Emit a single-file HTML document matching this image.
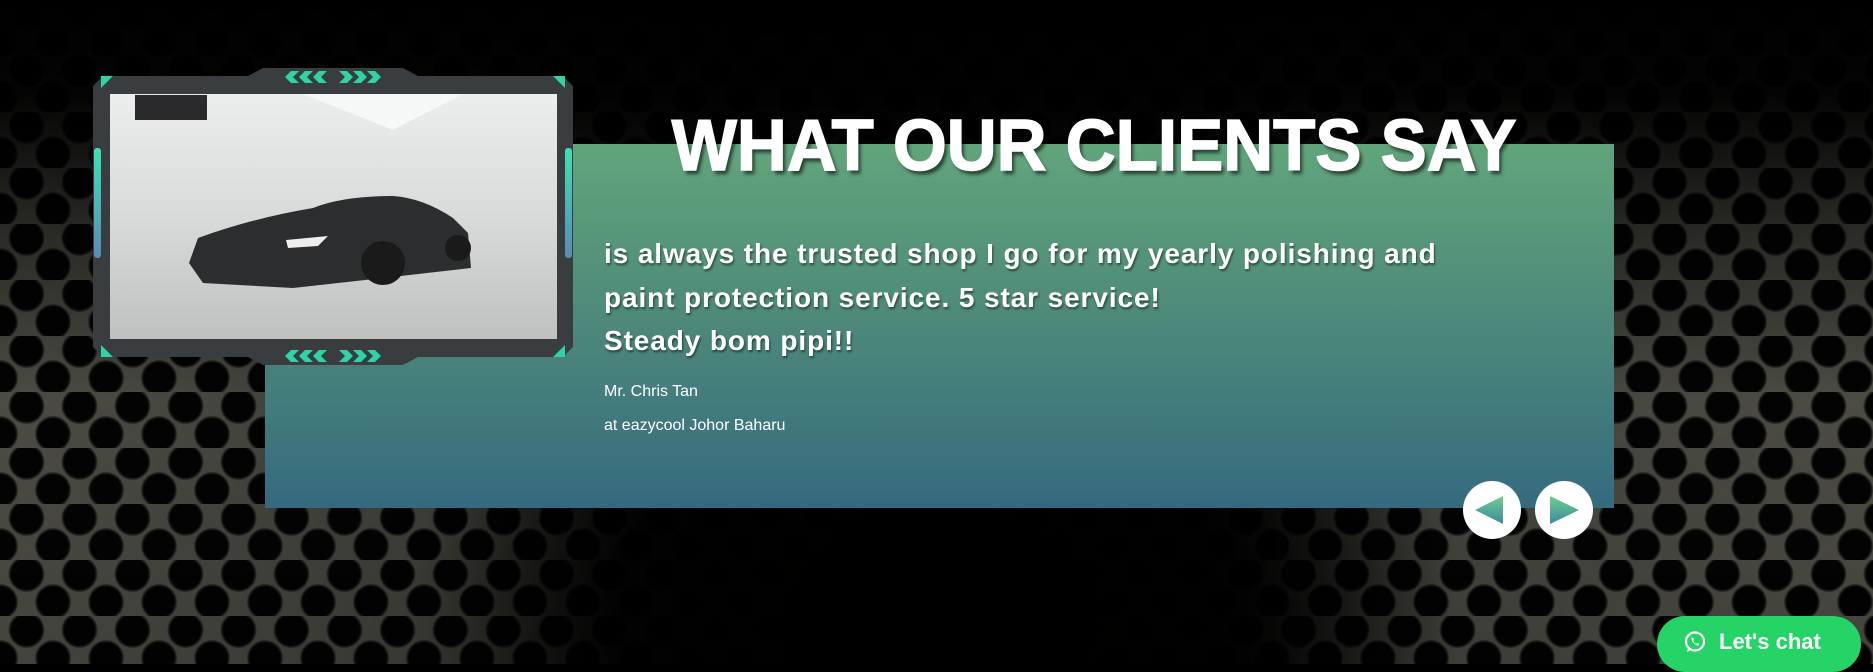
<!DOCTYPE html>
<html><head><meta charset="utf-8">
<style>
html,body{margin:0;padding:0;width:1873px;height:664px;overflow:hidden;background:#000;font-family:"Liberation Sans",sans-serif}
.bg{position:absolute;inset:0;
background-color:#55554d;
background-image:radial-gradient(circle at 26.5px 14px,#030303 15px,#1a1a18 16.5px,rgba(0,0,0,0) 18.5px),
radial-gradient(circle at 0px 42px,#030303 15px,#1a1a18 16.5px,rgba(0,0,0,0) 18.5px),
radial-gradient(circle at 53px 42px,#030303 15px,#1a1a18 16.5px,rgba(0,0,0,0) 18.5px);
background-size:53px 56px;}
.shade{position:absolute;inset:0;
background:radial-gradient(ellipse 520px 420px at 930px 620px,rgba(0,0,0,1) 0%,rgba(0,0,0,.95) 60%,rgba(0,0,0,0) 100%),
linear-gradient(180deg,rgba(0,0,0,1) 0%,rgba(0,0,0,.95) 14%,rgba(0,0,0,.5) 35%,rgba(0,0,0,.1) 60%,rgba(0,0,0,.2) 100%),
linear-gradient(90deg,rgba(0,0,0,0) 0%,rgba(0,0,0,0.2) 25%,rgba(0,0,0,0.7) 40%,rgba(0,0,0,0.75) 62%,rgba(0,0,0,0.1) 78%,rgba(0,0,0,0) 100%);}
.panel{position:absolute;left:265px;top:144px;width:1349px;height:364px;background:linear-gradient(180deg,#61a57b 0%,#4f8b7a 45%,#356a7e 100%)}
.title{position:absolute;left:0;top:105px;width:2188px;text-align:center;color:#fff;font-weight:bold;font-size:72px;letter-spacing:0px;text-shadow:3px 4px 4px rgba(0,0,0,.6);white-space:nowrap;transform:scaleX(.96);transform-origin:1094px 0;-webkit-text-stroke:1.5px #fff}
.body{position:absolute;left:604px;top:232px;color:#fff;font-weight:bold;font-size:28px;line-height:43.5px;text-shadow:1px 2px 2px rgba(0,0,0,.5);letter-spacing:.9px}
.name{position:absolute;left:604px;color:#fff;font-size:16px}
.btn{position:absolute;top:481px;width:58px;height:58px;border-radius:50%;background:#fff}
.chat{position:absolute;left:1657px;top:616px;width:204px;height:56px;border-radius:28px;background:#25d366;color:#fff;font-weight:bold;font-size:22px}
.frame{position:absolute;left:93px;top:68px;width:480px;height:297px}
</style></head><body>
<div class="bg"></div><div class="shade"></div>
<div class="panel"></div>
<div class="frame">
<svg width="480" height="297" viewBox="0 0 480 297">
<path d="M10 8 H155 L170 0 H310 L325 8 H470 L480 18 V279 L470 289 H325 L310 297 H170 L155 289 H10 L0 279 V18 Z" fill="#3a3d3f"/>
<defs><linearGradient id="w" x1="0" y1="0" x2="0" y2="1"><stop offset="0" stop-color="#eceded"/><stop offset=".5" stop-color="#d9dada"/><stop offset="1" stop-color="#bfc0c0"/></linearGradient>
<linearGradient id="s" x1="0" y1="0" x2="0" y2="1"><stop offset="0" stop-color="#3fe0b0"/><stop offset="1" stop-color="#5a8ab8"/></linearGradient></defs>
<rect x="17" y="26" width="447" height="245" fill="url(#w)"/>
<path d="M210 26 L370 26 L300 62 Z" fill="#f6f7f7"/>
<rect x="42" y="27" width="72" height="25" fill="#2a2a2c"/>
<path d="M105 170 Q160 150 220 140 Q250 128 300 128 Q330 130 360 150 L375 165 L378 200 L290 210 L200 220 L110 215 L96 195 Z" fill="#2c2d2e"/>
<circle cx="290" cy="195" r="22" fill="#1a1a1a"/><circle cx="365" cy="180" r="13" fill="#1a1a1a"/>
<path d="M193 172 L235 168 L225 178 L195 180 Z" fill="#eee"/>
<path d="M8 8 L20 8 L8 20 Z" fill="#2fd3a5"/><path d="M472 8 L460 8 L472 20 Z" fill="#2fd3a5"/>
<path d="M8 289 L20 289 L8 277 Z" fill="#2fd3a5"/><path d="M472 289 L460 289 L472 277 Z" fill="#2fd3a5"/>
<rect x="1" y="80" width="7" height="110" rx="3" fill="url(#s)"/><rect x="472" y="80" width="7" height="110" rx="3" fill="url(#s)"/>
<g fill="#2fd3a5">
<path d="M198 3 h8 l-6 6 l6 6 h-8 l-6 -6 Z M212 3 h8 l-6 6 l6 6 h-8 l-6 -6 Z M226 3 h8 l-6 6 l6 6 h-8 l-6 -6 Z M246 3 h8 l6 6 l-6 6 h-8 l6 -6 Z M260 3 h8 l6 6 l-6 6 h-8 l6 -6 Z M274 3 h8 l6 6 l-6 6 h-8 l6 -6 Z"/>
<path transform="translate(0,279)" d="M198 3 h8 l-6 6 l6 6 h-8 l-6 -6 Z M212 3 h8 l-6 6 l6 6 h-8 l-6 -6 Z M226 3 h8 l-6 6 l6 6 h-8 l-6 -6 Z M246 3 h8 l6 6 l-6 6 h-8 l6 -6 Z M260 3 h8 l6 6 l-6 6 h-8 l6 -6 Z M274 3 h8 l6 6 l-6 6 h-8 l6 -6 Z"/>
</g>
</svg></div>
<div class="title">WHAT OUR CLIENTS SAY</div>
<div class="body">is always the trusted shop I go for my yearly polishing and<br>paint protection service. 5 star service!<br>Steady bom pipi!!</div>
<div class="name" style="top:383px">Mr. Chris Tan</div>
<div class="name" style="top:417px">at eazycool Johor Baharu</div>
<div class="btn" style="left:1463px"><svg width="58" height="58"><defs><linearGradient id="a" x1="0" y1="0" x2="0" y2="1"><stop offset="0" stop-color="#6fcf8f"/><stop offset="1" stop-color="#3a8aa0"/></linearGradient></defs><path d="M12 29 L40 15 L40 43 Z" fill="url(#a)"/></svg></div>
<div class="btn" style="left:1535px"><svg width="58" height="58"><path d="M15 15 L44 29 L15 43 Z" fill="url(#a)"/></svg></div>
<div class="chat"><svg style="position:absolute;left:26px;top:14px" width="24" height="24" viewBox="0 0 24 24"><circle cx="12" cy="11.5" r="9" fill="none" stroke="#fff" stroke-width="2.2"/><path d="M4 22 L5.5 16.5 L8.5 19.5 Z" fill="#fff"/><path d="M8.5 7.5 Q8 10 10.5 13 Q13.5 16 16 15.5 L16 13.8 L14.3 13 L13.3 14 Q11 13 10 10.7 L11 9.7 L10.2 8 Z" fill="#fff"/></svg><span style="position:absolute;left:62px;top:13px">Let's chat</span></div>
</body></html>
